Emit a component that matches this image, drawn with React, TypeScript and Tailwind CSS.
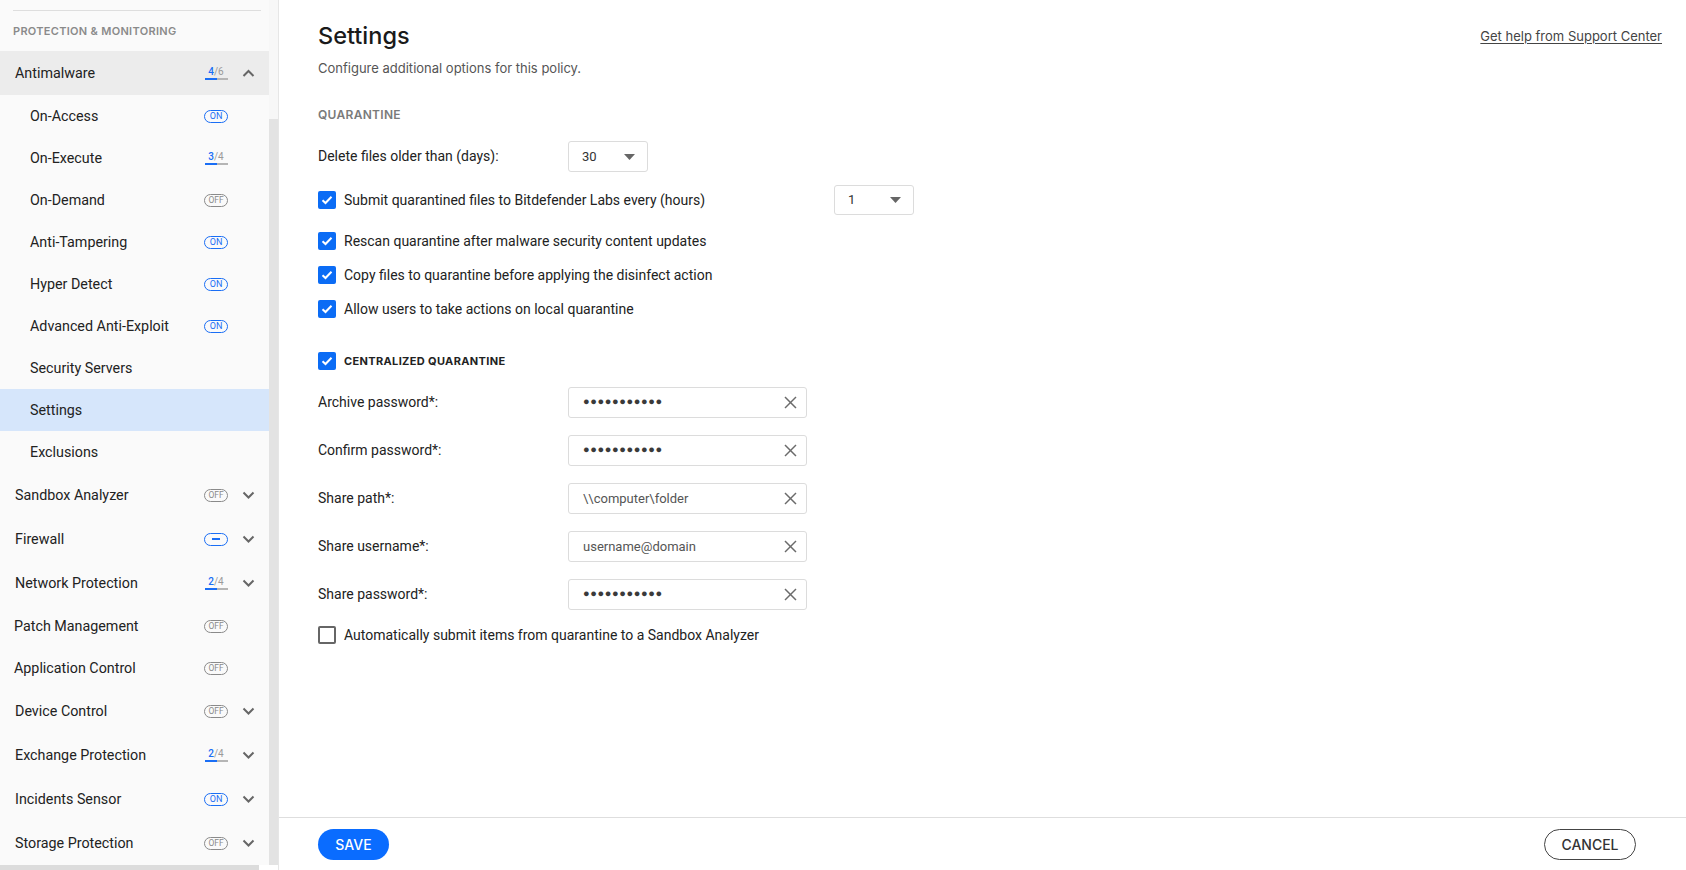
import React from "react";

const HEAD = { fontFamily: "Inter, 'Open Sans', sans-serif" };
const BODY = { fontFamily: "Roboto, 'Liberation Sans', sans-serif" };

type Badge =
  | { kind: "on" }
  | { kind: "off" }
  | { kind: "dash" }
  | { kind: "frac"; a: number; b: number }
  | null;

function BadgeView({ b }: { b: Badge }) {
  if (!b) return <div className="w-[24px]" />;
  if (b.kind === "on")
    return (
      <div className="w-[24px] h-[13px] rounded-full border-[1.5px] border-[#1a6ef5] flex items-center justify-center text-[9px] leading-none text-[#1a6ef5]">
        ON
      </div>
    );
  if (b.kind === "off")
    return (
      <div className="w-[24px] h-[13px] rounded-full border-[1.5px] border-[#8a8a8a] flex items-center justify-center text-[8.5px] leading-none text-[#8a8a8a]">
        OFF
      </div>
    );
  if (b.kind === "dash")
    return (
      <div className="w-[24px] h-[13px] rounded-full border-[1.5px] border-[#1a6ef5] flex items-center justify-center">
        <div className="w-[8px] h-[2px] bg-[#1a6ef5]" />
      </div>
    );
  return (
    <div className="w-[24px] flex flex-col items-center">
      <div className="text-[10px] leading-[11px]">
        <span className="text-[#1a6ef5] font-medium">{b.a}</span>
        <span className="text-[#9a9a9a]">/{b.b}</span>
      </div>
      <div className="w-[23px] h-[2px] bg-[#b5b5b5] flex mt-[1px]">
        <div className="h-[2px] bg-[#1a6ef5]" style={{ width: `${Math.round(23 / 2)}px` }} />
      </div>
    </div>
  );
}

function Chevron({ up }: { up?: boolean }) {
  return (
    <svg width="13" height="8" viewBox="0 0 13 8" className="text-[#666]">
      {up ? (
        <polyline points="1.5,7 6.5,2 11.5,7" fill="none" stroke="currentColor" strokeWidth="2" />
      ) : (
        <polyline points="1.5,1.5 6.5,6.5 11.5,1.5" fill="none" stroke="currentColor" strokeWidth="2" />
      )}
    </svg>
  );
}

function NavRow({
  label,
  badge,
  chevron,
  sub,
  selected,
  shade,
  indent = 15,
  up,
}: {
  label: string;
  badge: Badge;
  chevron?: boolean;
  sub?: boolean;
  selected?: boolean;
  shade?: boolean;
  indent?: number;
  up?: boolean;
}) {
  const h = sub ? "h-[42px]" : chevron ? "h-[44px]" : "h-[42px]";
  const bg = selected ? "bg-[#d6e6fb]" : shade ? "bg-[#ececec]" : "";
  return (
    <div className={`${h} ${bg} flex items-center`}>
      <div
        className={`flex-1 pt-[2px] text-[14.3px] text-[#222] ${sub ? "pl-[30px]" : indent === 14 ? "pl-[14px]" : "pl-[15px]"}`}
      >
        {label}
      </div>
      <div className="w-[24px] mr-[14px] flex justify-center">
        <BadgeView b={badge} />
      </div>
      <div className="w-[13px] mr-[14px] flex justify-center">{chevron ? <Chevron up={up} /> : null}</div>
    </div>
  );
}

function Check({ checked = true }: { checked?: boolean }) {
  if (!checked)
    return <div className="w-[18px] h-[18px] rounded-[2px] border-2 border-[#666] bg-white shrink-0" />;
  return (
    <div className="w-[18px] h-[18px] rounded-[2px] bg-[#0b6cf5] flex items-center justify-center shrink-0">
      <svg width="12" height="10" viewBox="0 0 12 10">
        <polyline points="1.5,5.2 4.5,8 10.5,1.8" fill="none" stroke="white" strokeWidth="2" />
      </svg>
    </div>
  );
}

function Select({ value, h = "h-[31px]" }: { value: string; h?: string }) {
  return (
    <div className={`w-[80px] ${h} border border-[#dcdcdc] rounded-[3px] flex items-center pl-[13px] pr-[12px] bg-white`}>
      <span className="flex-1 text-[13px] text-[#333]">{value}</span>
      <svg width="11" height="6" viewBox="0 0 11 6">
        <polygon points="0,0 11,0 5.5,6" fill="#666" />
      </svg>
    </div>
  );
}

function XIcon() {
  return (
    <svg width="13" height="13" viewBox="0 0 13 13">
      <line x1="1" y1="1" x2="12" y2="12" stroke="#6b6b6b" strokeWidth="1.5" />
      <line x1="12" y1="1" x2="1" y2="12" stroke="#6b6b6b" strokeWidth="1.5" />
    </svg>
  );
}

function Field({ label, value, dots }: { label: string; value?: string; dots?: boolean }) {
  return (
    <div className="flex items-center">
      <div className="w-[250px] text-[14px] text-[#222]">{label}</div>
      <div className="w-[239px] h-[31px] border border-[#dcdcdc] rounded-[3px] flex items-center pl-[14px] pr-[9px] bg-white">
        <span className={`flex-1 ${dots ? "text-[11px] tracking-[0.6px] text-[#3a3a3a]" : "text-[13px] text-[#555]"}`}>
          {dots ? "●●●●●●●●●●●" : value}
        </span>
        <XIcon />
      </div>
    </div>
  );
}

function CheckRow({ label, checked = true, children }: { label: string; checked?: boolean; children?: React.ReactNode }) {
  return (
    <div className="flex items-center">
      <Check checked={checked} />
      <span className={`ml-[8px] text-[14px] text-[#222] ${children ? "w-[490px]" : ""}`}>{label}</span>
      {children}
    </div>
  );
}

export default function App() {
  return (
    <div className="w-[1686px] h-[870px] flex overflow-hidden bg-white" style={BODY}>
      {/* Sidebar */}
      <div className="w-[278px] h-[870px] flex flex-col shrink-0">
        <div className="flex flex-1 min-h-0">
          <div className="w-[269px] bg-[#fafafa] flex flex-col">
            <div className="h-[10px]" />
            <div className="mx-[13px] w-[248px] h-px bg-[#dedede]" />
            <div className="h-[40px] flex items-center pl-[13px] text-[11px] font-semibold tracking-[0.3px] text-[#8a8a8a]" style={HEAD}>
              PROTECTION &amp; MONITORING
            </div>
            <NavRow label="Antimalware" badge={{ kind: "frac", a: 4, b: 6 }} chevron up shade />
            <NavRow label="On-Access" badge={{ kind: "on" }} sub />
            <NavRow label="On-Execute" badge={{ kind: "frac", a: 3, b: 4 }} sub />
            <NavRow label="On-Demand" badge={{ kind: "off" }} sub />
            <NavRow label="Anti-Tampering" badge={{ kind: "on" }} sub />
            <NavRow label="Hyper Detect" badge={{ kind: "on" }} sub />
            <NavRow label="Advanced Anti-Exploit" badge={{ kind: "on" }} sub />
            <NavRow label="Security Servers" badge={null} sub />
            <NavRow label="Settings" badge={null} sub selected />
            <NavRow label="Exclusions" badge={null} sub />
            <NavRow label="Sandbox Analyzer" badge={{ kind: "off" }} chevron />
            <NavRow label="Firewall" badge={{ kind: "dash" }} chevron />
            <NavRow label="Network Protection" badge={{ kind: "frac", a: 2, b: 4 }} chevron />
            <NavRow label="Patch Management" badge={{ kind: "off" }} indent={14} />
            <NavRow label="Application Control" badge={{ kind: "off" }} indent={14} />
            <NavRow label="Device Control" badge={{ kind: "off" }} chevron />
            <NavRow label="Exchange Protection" badge={{ kind: "frac", a: 2, b: 4 }} chevron />
            <NavRow label="Incidents Sensor" badge={{ kind: "on" }} chevron />
            <NavRow label="Storage Protection" badge={{ kind: "off" }} chevron />
          </div>
          <div className="w-[9px] flex flex-col bg-[#f7f7f7]">
            <div className="h-[119px]" />
            <div className="flex-1 bg-[#e3e3e3]" />
          </div>
        </div>
        <div className="h-[5px] flex">
          <div className="w-[259px] bg-[#dcdcdc]" />
          <div className="flex-1 bg-white" />
        </div>
      </div>

      {/* Main */}
      <div className="flex-1 flex flex-col border-l border-[#e6e6e6] min-w-0">
        <div className="flex-1 pl-[39px] pr-[24px] pt-[22px] flex flex-col">
          <div className="flex items-start justify-between">
            <div className="text-[23.5px] leading-[28px] font-medium text-[#1a1a1a]" style={HEAD}>
              Settings
            </div>
            <a className="text-[13px] leading-[28px] text-[#444] underline underline-offset-2" style={HEAD}>
              Get help from Support Center
            </a>
          </div>
          <div className="mt-[8px] text-[13px] leading-[20px] text-[#555]" style={HEAD}>
            Configure additional options for this policy.
          </div>
          <div className="mt-[29px] text-[12px] leading-[16px] font-semibold text-[#7a7a7a] tracking-[0.3px]" style={HEAD}>
            QUARANTINE
          </div>
          <div className="mt-[18px] flex items-center">
            <div className="w-[250px] text-[14px] text-[#222]">Delete files older than (days):</div>
            <Select value="30" />
          </div>
          <div className="mt-[13px] h-[30px] flex items-center">
            <CheckRow label="Submit quarantined files to Bitdefender Labs every (hours)">
              <Select value="1" h="h-[30px]" />
            </CheckRow>
          </div>
          <div className="mt-[15px] flex flex-col gap-[12px]">
            <div className="h-[22px] flex items-center">
              <CheckRow label="Rescan quarantine after malware security content updates" />
            </div>
            <div className="h-[22px] flex items-center">
              <CheckRow label="Copy files to quarantine before applying the disinfect action" />
            </div>
            <div className="h-[22px] flex items-center">
              <CheckRow label="Allow users to take actions on local quarantine" />
            </div>
          </div>
          <div className="mt-[30px] h-[22px] flex items-center">
            <Check />
            <span className="ml-[8px] text-[11px] font-bold text-[#222] tracking-[0.35px]" style={HEAD}>
              CENTRALIZED QUARANTINE
            </span>
          </div>
          <div className="mt-[15px] flex flex-col gap-[17px]">
            <Field label="Archive password*:" dots />
            <Field label="Confirm password*:" dots />
            <Field label="Share path*:" value="\\computer\folder" />
            <Field label="Share username*:" value="username@domain" />
            <Field label="Share password*:" dots />
          </div>
          <div className="mt-[14px] h-[22px] flex items-center">
            <CheckRow label="Automatically submit items from quarantine to a Sandbox Analyzer" checked={false} />
          </div>
        </div>
        <div className="h-[53px] border-t border-[#dedede] flex items-center justify-between pl-[39px] pr-[50px]">
          <button
            className="w-[71px] h-[31px] rounded-full bg-[#0a6cff] text-white text-[14px] font-medium"
            style={HEAD}
          >
            SAVE
          </button>
          <button
            className="w-[92px] h-[31px] rounded-full border border-[#444] text-[#333] text-[14px] font-medium bg-white"
            style={HEAD}
          >
            CANCEL
          </button>
        </div>
      </div>
    </div>
  );
}
